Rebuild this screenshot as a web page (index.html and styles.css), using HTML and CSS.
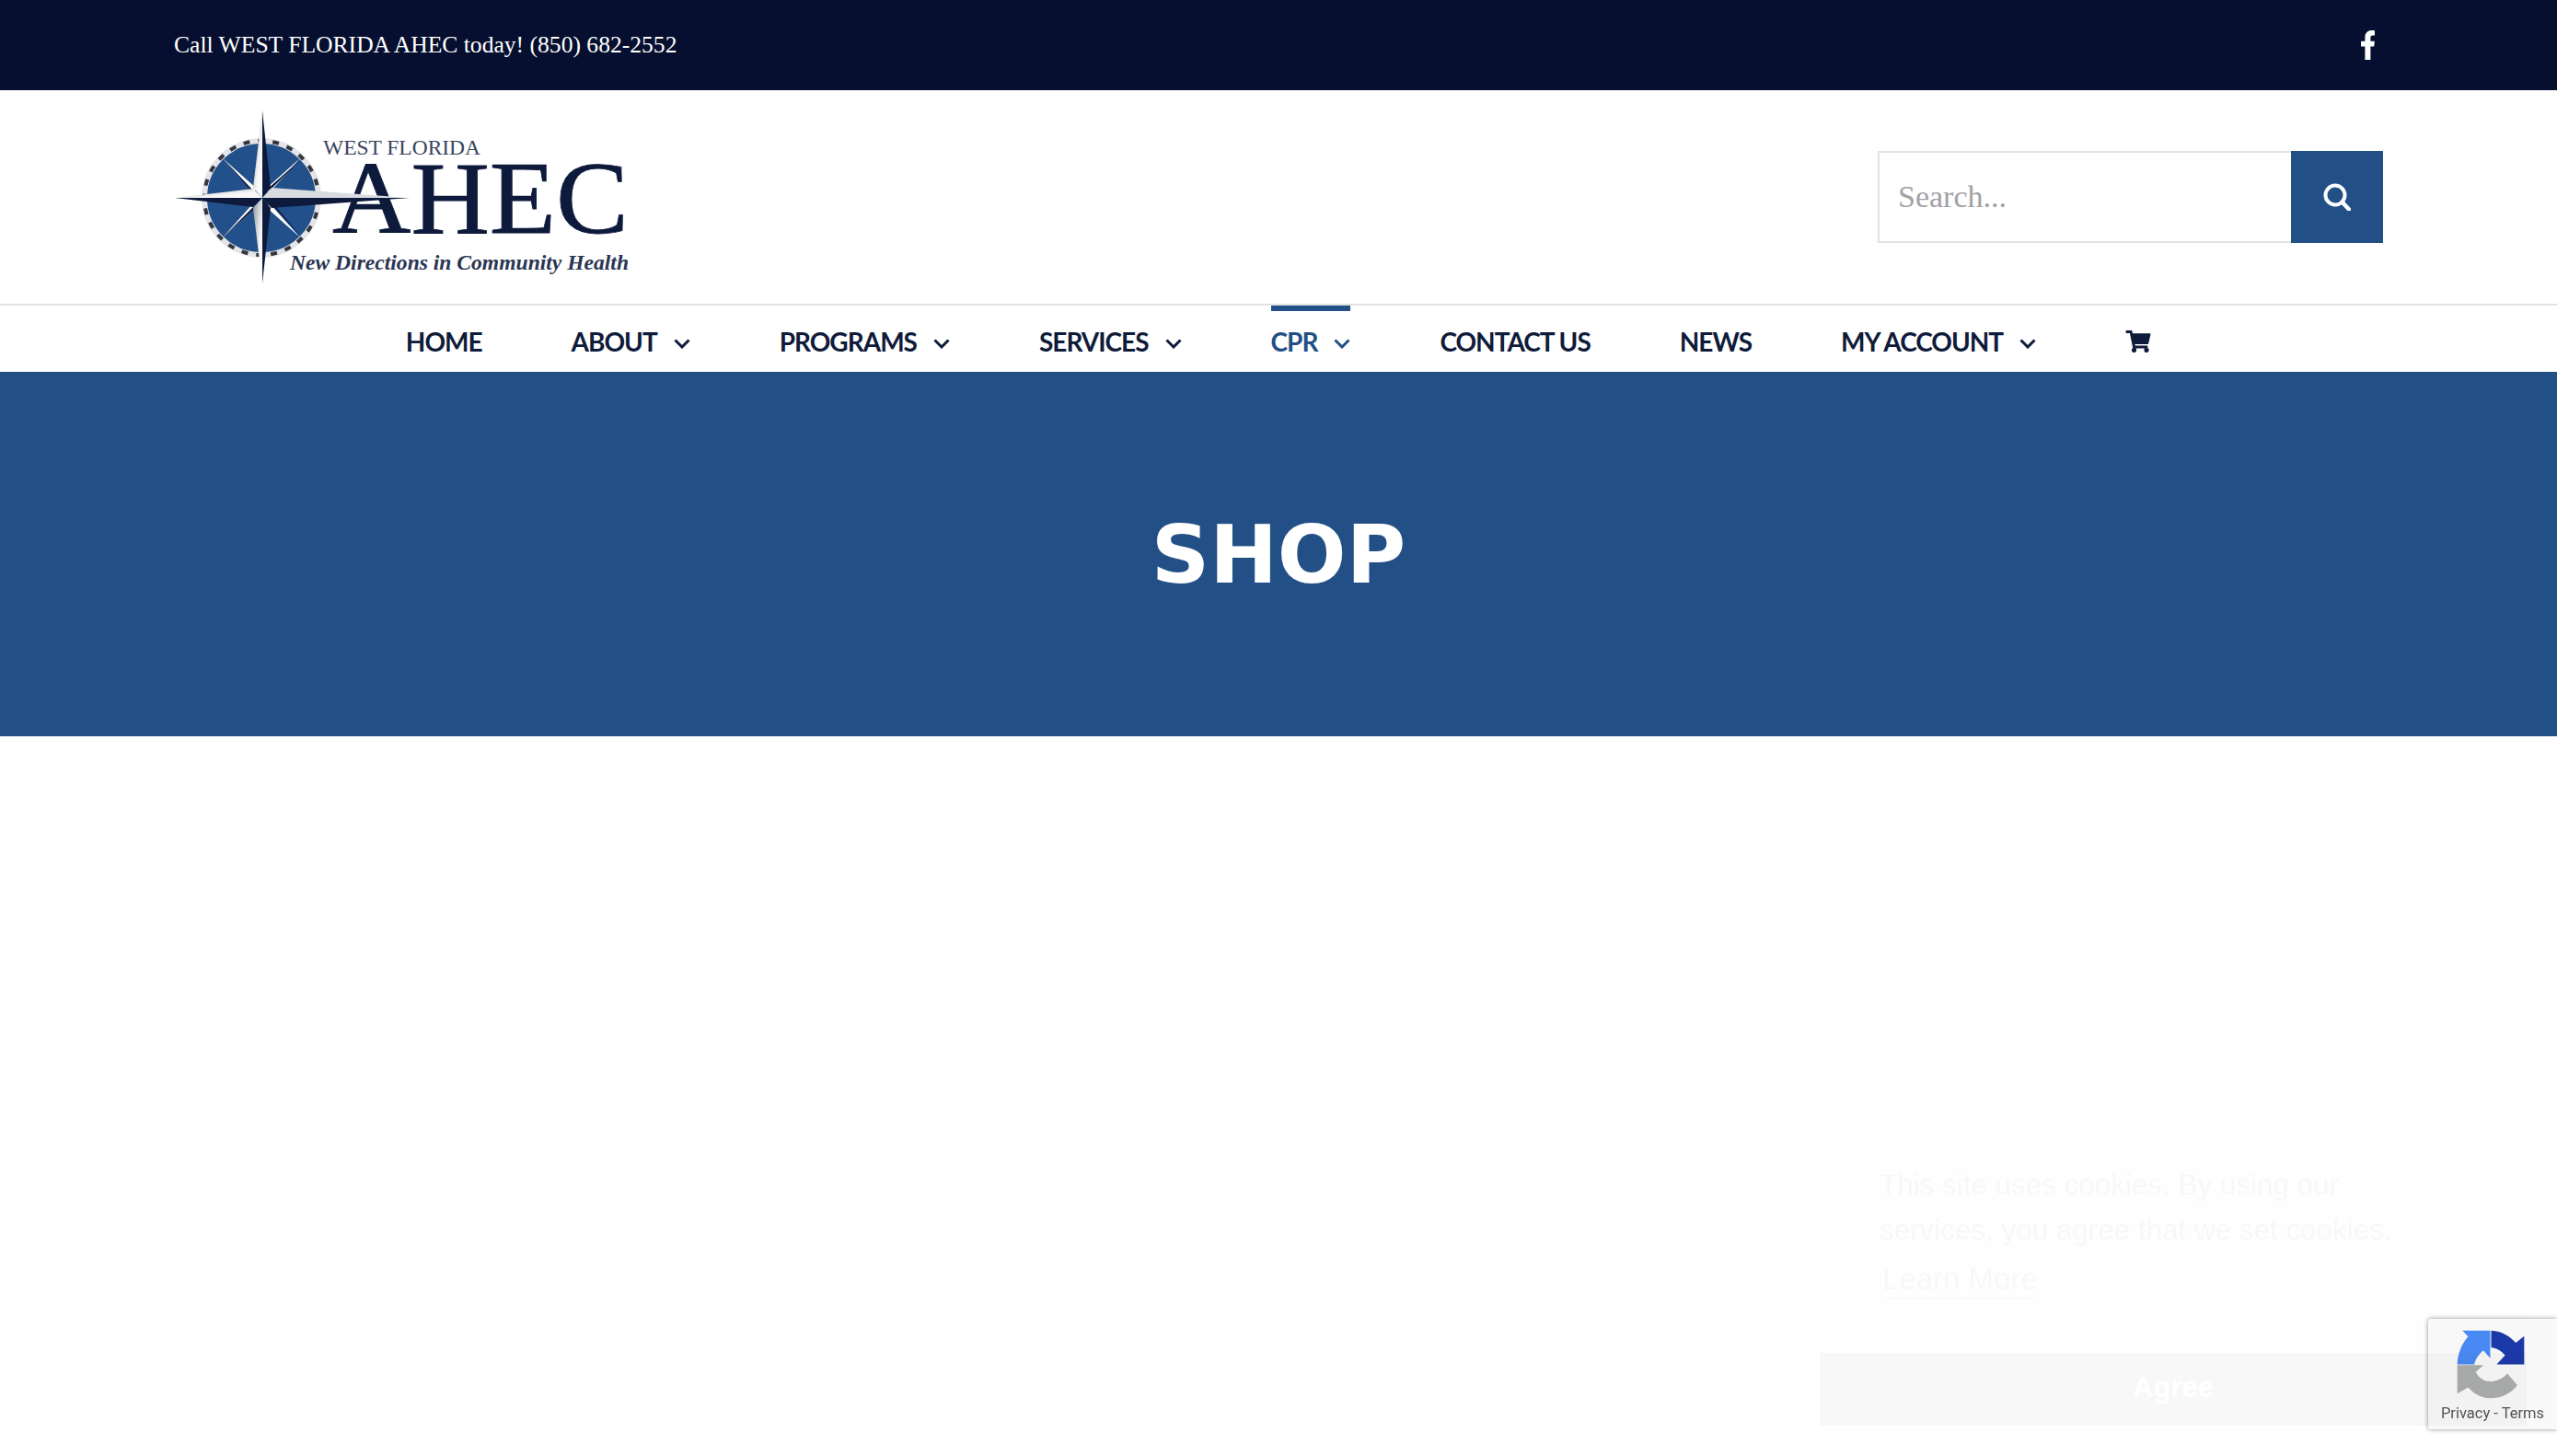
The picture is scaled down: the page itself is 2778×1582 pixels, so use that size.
FILE: index.html
```html
<!DOCTYPE html>
<html lang="en">
<head>
    <meta charset="UTF-8">
    <meta name="viewport" content="width=device-width, initial-scale=1.0">
    <title>Shop - West Florida AHEC</title>
    <link rel="stylesheet" href="styles.css">
</head>
<body>

    <div class="top-bar">
        <span class="top-text">Call WEST FLORIDA AHEC today! (850) 682-2552</span>
        <a href="#" class="fb-link">
            <svg width="15" height="32" viewBox="0 0 15 32"><path fill="#fff" d="M4.4 32V17.6H0v-5.8h4.4V7.6C4.4 2.6 7.6 0 12 0c1.5 0 2.6.1 3 .2v5.2h-2.100c-2 0-2.500 1-2.500 2.600v3.800h4.500l-.7 5.800h-3.800V32z"/></svg>
        </a>
    </div>

    <header class="site-header">
        <a href="#" class="logo">
            <svg width="500" height="192" viewBox="0 0 500 192">
                <defs>
                    <linearGradient id="steel" x1="0" y1="0" x2="1" y2="1">
                        <stop offset="0" stop-color="#8d929c"/>
                        <stop offset="0.6" stop-color="#f4f4f4"/>
                        <stop offset="1" stop-color="#ffffff"/>
                    </linearGradient>
                </defs>
                <circle cx="94" cy="97" r="60" fill="#22508a"/>
                <circle cx="94" cy="97" r="62" fill="none" stroke="#e4e5e8" stroke-width="6"/>
                <circle cx="94" cy="97" r="62" fill="none" stroke="#33363e" stroke-width="4" stroke-dasharray="7 9"/>

                <path fill="#fff" d="M52 54l37 33-4 4zM136 54l-33 37-4-4zM52 140l33-37 4 4zM136 140l-37-33 4-4z"/>
                <path fill="#0e1a3c" d="M53 55l33 35-2 1zM137 55l-36 32 2 2zM53 139l36-32-2-2zM137 139l-33-36 2-1z"/>

                <path fill="url(#steel)" d="M95 2L85 86l10 11z"/>
                <path fill="#0e1a3c" d="M95 2l9 84-9 11z"/>
                <path fill="url(#steel)" d="M95 190L85 108l10-11z"/>
                <path fill="#0e1a3c" d="M95 190l9-82-9-11z"/>
                <path fill="url(#steel)" d="M0 97l85-10 10 10z"/>
                <path fill="#0e1a3c" d="M0 97l85 10 10-10z"/>

                <text x="161" y="50" class="logo-west" textLength="171" lengthAdjust="spacingAndGlyphs">WEST FLORIDA</text>
                <text x="171" y="135" class="logo-ahec" textLength="322" lengthAdjust="spacingAndGlyphs">AHEC</text>
                <text x="125" y="175" class="logo-tag" textLength="368" lengthAdjust="spacingAndGlyphs">New Directions in Community Health</text>
                <path fill="#d9dbe0" d="M255 97L105 86 95 97z"/>
                <path fill="#0e1a3c" d="M255 97l-150 11-10-11z"/>
            </svg>
        </a>
        <form class="search-form">
            <input class="search-input" type="text" placeholder="Search...">
            <button class="search-btn" type="button">
                <svg width="30" height="30" viewBox="0 0 30 30"><circle cx="13" cy="13" r="10.500" fill="none" stroke="#fff" stroke-width="4"/><path d="M21 21l7 7.500" stroke="#fff" stroke-width="4.500" stroke-linecap="round"/></svg>
            </button>
        </form>
    </header>

    <nav class="main-nav">
        <a href="#" class="nav-item">HOME</a>
        <a href="#" class="nav-item">ABOUT
            <svg class="chev" width="18" height="11" viewBox="0 0 18 11"><path d="M1.500 1.500L9 9l7.500-7.500" fill="none" stroke="currentColor" stroke-width="3"/></svg>
        </a>
        <a href="#" class="nav-item">PROGRAMS
            <svg class="chev" width="18" height="11" viewBox="0 0 18 11"><path d="M1.500 1.500L9 9l7.500-7.500" fill="none" stroke="currentColor" stroke-width="3"/></svg>
        </a>
        <a href="#" class="nav-item">SERVICES
            <svg class="chev" width="18" height="11" viewBox="0 0 18 11"><path d="M1.500 1.500L9 9l7.500-7.500" fill="none" stroke="currentColor" stroke-width="3"/></svg>
        </a>
        <a href="#" class="nav-item active">CPR
            <svg class="chev" width="18" height="11" viewBox="0 0 18 11"><path d="M1.500 1.500L9 9l7.500-7.500" fill="none" stroke="currentColor" stroke-width="3"/></svg>
        </a>
        <a href="#" class="nav-item">CONTACT US</a>
        <a href="#" class="nav-item">NEWS</a>
        <a href="#" class="nav-item">MY ACCOUNT
            <svg class="chev" width="18" height="11" viewBox="0 0 18 11"><path d="M1.500 1.500L9 9l7.500-7.500" fill="none" stroke="currentColor" stroke-width="3"/></svg>
        </a>
        <a href="#" class="nav-item">
            <svg width="28" height="24" viewBox="0 0 576 512"><path fill="currentColor" d="M528.12 301.319l47.273-208C578.806 78.301 567.391 67 551.99 67H159.208l-9.166-44.81C147.758 10.021 137.93 0 126.529 0H24C10.745 0 0 10.745 0 24v16c0 13.255 10.745 24 24 24h69.883l70.248 343.435C147.325 417.1 136 435.222 136 456c0 30.928 25.072 56 56 56s56-25.072 56-56c0-15.674-6.447-29.835-16.824-40h209.647C430.447 426.165 424 440.326 424 456c0 30.928 25.072 56 56 56s56-25.072 56-56c0-22.172-12.888-41.332-31.579-50.405l5.517-24.276c3.413-15.018-8.002-29.319-23.403-29.319H218.117l-6.545-32h293.145c11.206 0 20.92-7.754 23.403-18.681z"/></svg>
        </a>
    </nav>

    <section class="hero">
        <h1>SHOP</h1>
    </section>

    <div class="recaptcha">
        <svg width="77" height="77" viewBox="150 75 230 230">
            <path fill="#4a8af4" d="M155 190C156 155 170 122 190 100L172 80H262V170L240 145C225 155 214 172 210 190Z"/>
            <path fill="#1c3aa9" d="M265 80C300 82 325 98 345 120L372 98V190H283L310 160C298 146 283 137 265 135Z"/>
            <path fill="#acaeae" d="M155 192H240L215 215C228 240 250 248 270 245C290 242 305 233 318 220L350 258C325 288 295 300 262 300C230 300 210 285 190 265L155 285Z"/>
        </svg>
        <div class="recaptcha-links">Privacy - Terms</div>
    </div>

    <div class="cookie-box">
        <p class="cookie-text">This site uses cookies. By using our services, you agree that we set cookies.</p>
        <a href="#" class="cookie-link">Learn More</a>
        <button class="cookie-btn" type="button">Agree</button>
    </div>

</body>
</html>
```

FILE: styles.css
```css
html, body {
    margin: 0;
    height: 100%;
    overflow: hidden;
    background-color: #fff;
}
a {
    text-decoration: none;
    color: inherit;
}

.top-bar {
    height: 98px;
    background-color: #060f2f;
    color: #fff;
    display: flex;
    justify-content: space-between;
    align-items: center;
    padding: 0 198px 0 189px;
}
.top-text {
    font-family: "Liberation Serif", serif;
    font-size: 25.6px;
}
.fb-link {
    display: flex;
}

.site-header {
    height: 232px;
    display: flex;
    justify-content: space-between;
    align-items: center;
    padding: 0 189px 0 190px;
}
.logo {
    display: flex;
}
.logo-west {
    font-family: "Liberation Serif", serif;
    font-size: 23px;
    fill: #3a4560;
}
.logo-ahec {
    font-family: "Liberation Serif", serif;
    font-size: 112px;
    fill: #0e1a3c;
    stroke: #0e1a3c;
    stroke-width: 0.8;
}
.logo-tag {
    font-family: "Liberation Serif", serif;
    font-style: italic;
    font-weight: bold;
    font-size: 23.5px;
    fill: #2a3553;
}
.search-form {
    display: flex;
    height: 100px;
}
.search-input {
    width: 449px;
    box-sizing: border-box;
    border: 2px solid #e2e2e2;
    border-right: none;
    padding: 0 20px;
    font-family: "Liberation Serif", serif;
    font-size: 34px;
    outline: none;
}
.search-input::placeholder {
    color: #a0a2a6;
    opacity: 1;
}
.search-btn {
    width: 100px;
    border: none;
    padding: 0;
    background-color: #224f85;
    display: flex;
    align-items: center;
    justify-content: center;
}

.main-nav {
    height: 72px;
    border-top: 2px solid #e2e2e2;
    display: flex;
    justify-content: center;
    gap: 97px;
    font-family: "Lato", sans-serif;
    font-weight: 700;
    font-size: 28px;
    letter-spacing: -1px;
    color: #0f1b3a;
}
.nav-item {
    display: flex;
    align-items: center;
    gap: 18px;
    border-top: 6px solid transparent;
    white-space: nowrap;
}
.nav-item.active {
    color: #224f85;
    border-top-color: #224f85;
}
.chev {
    margin-top: 4px;
}

.hero {
    height: 396px;
    background-color: #224f85;
    display: flex;
    align-items: center;
    justify-content: center;
}
.hero h1 {
    margin: 0;
    font-family: "DejaVu Sans", sans-serif;
    font-weight: 700;
    font-size: 88px;
    color: #fff;
}

.recaptcha {
    position: fixed;
    right: 0;
    bottom: 29px;
    width: 140px;
    height: 120px;
    background-color: #f9f9f9;
    border-radius: 3px 0 0 3px;
    box-shadow: 0 0 5px rgba(0, 0, 0, 0.45);
    display: flex;
    flex-direction: column;
    align-items: center;
}
.recaptcha svg {
    margin-top: 11px;
    margin-right: 4px;
}
.recaptcha-links {
    font-family: "Roboto", sans-serif;
    font-size: 16.5px;
    color: #555;
    white-space: nowrap;
    margin-top: 5px;
}

.cookie-box {
    position: fixed;
    right: 33px;
    bottom: 33px;
    width: 768px;
    box-sizing: border-box;
    padding-top: 65px;
    background-color: rgba(0, 0, 0, 0.004);
    font-family: "Liberation Sans", sans-serif;
    font-size: 31.4px;
    line-height: 49px;
    color: rgba(0, 0, 0, 0.03);
}
.cookie-text {
    margin: 0 65px;
    width: 600px;
}
.cookie-link {
    display: inline-block;
    margin: 9px 0 0 68px;
    line-height: 40px;
    font-size: 33px;
    border-bottom: 1px solid rgba(0, 0, 0, 0.03);
}
.cookie-btn {
    display: block;
    width: 100%;
    height: 79px;
    margin-top: 55px;
    padding-bottom: 4px;
    border: none;
    background-color: rgba(0, 0, 0, 0.028);
    color: #fff;
    font-family: "Liberation Sans", sans-serif;
    font-weight: 700;
    font-size: 31px;
}
```
